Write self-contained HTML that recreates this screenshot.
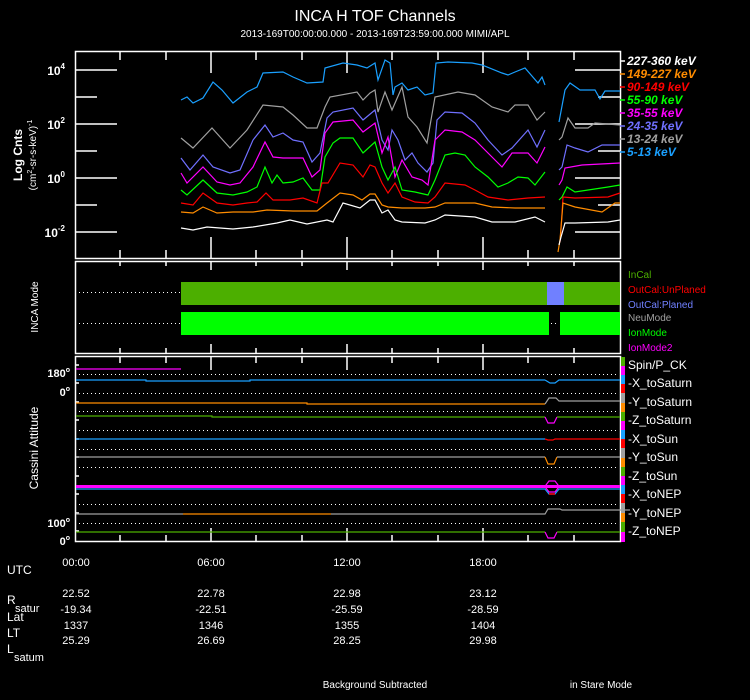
<!DOCTYPE html>
<html><head><meta charset="utf-8"><style>
html,body{margin:0;padding:0;background:#000;width:750px;height:700px;overflow:hidden}
svg{display:block}
text{font-family:"Liberation Sans",sans-serif;fill:#fff}
</style></head><body>
<svg width="750" height="700" viewBox="0 0 750 700" xmlns="http://www.w3.org/2000/svg">
<rect width="750" height="700" fill="#000"/>
<text x="375" y="21" font-size="16" text-anchor="middle">INCA H TOF Channels</text>
<text x="375" y="37" font-size="10" text-anchor="middle">2013-169T00:00:00.000 - 2013-169T23:59:00.000 MIMI/APL</text>

<!-- TOP PANEL -->
<g stroke="#fff" stroke-width="1.5" fill="none">
<rect x="75.5" y="51.5" width="545" height="207"/>
<path d="M75 70h42M75 124h42M75 178h42M75 232h42M75 97h22M75 151h22M75 205h22"/>
<path d="M620 70h-45M620 124h-45M620 178h-45M620 232h-45M620 97h-22M620 151h-22M620 205h-22"/>
<path d="M211 51v22M347 51v22M483 51v22M120 51v9M166 51v9M256 51v9M302 51v9M392 51v9M438 51v9M528 51v9M574 51v9"/>
<path d="M211 259v-22M347 259v-22M483 259v-22M120 259v-9M166 259v-9M256 259v-9M302 259v-9M392 259v-9M438 259v-9M528 259v-9M574 259v-9"/>
</g>
<g font-size="12" font-weight="bold" text-anchor="end">
<text x="65" y="75">10<tspan font-size="8" dy="-6">4</tspan></text>
<text x="65" y="129">10<tspan font-size="8" dy="-6">2</tspan></text>
<text x="65" y="183">10<tspan font-size="8" dy="-6">0</tspan></text>
<text x="65" y="237">10<tspan font-size="8" dy="-6">-2</tspan></text>
</g>
<text transform="translate(22,155) rotate(-90)" font-size="12" font-weight="bold" text-anchor="middle">Log Cnts</text>
<text transform="translate(36,155) rotate(-90)" font-size="10" text-anchor="middle">(cm<tspan font-size="7" dy="-4">2</tspan><tspan dy="4">-sr-s-keV)</tspan><tspan font-size="7" dy="-4">-1</tspan></text>

<g fill="none" stroke-width="1.2">
<polyline stroke="#1aa0ff" points="181,100 187,97 193,103 203,98 213,82 222,90 233,103 247,92 257,87 263,73 283,72 293,77 307,83 323,82 325,68 343,63 357,65 367,68 375,63 378,80 385,60 390,63 393,95 395,87 402,83 408,90 417,87 425,95 433,93 436,63 448,62 472,63 482,65 502,73 508,75 515,72 525,68 538,83 542,77 545,85"/>
<polyline stroke="#1aa0ff" points="559,122 565,90 570,83 580,90 595,90 600,99 605,91 620,91"/>
<polyline stroke="#a0a0a0" points="181,138 193,148 212,128 230,148 247,130 263,105 283,107 293,115 307,128 317,128 325,107 330,97 357,92 363,100 370,93 375,90 378,112 385,92 392,110 402,87 408,117 417,127 427,143 435,97 458,92 475,95 492,107 508,112 515,105 528,105 537,120 545,112"/>
<polyline stroke="#a0a0a0" points="559,140 562,137 568,118 575,128 588,128 595,123 620,125"/>
<polyline stroke="#7070ff" points="181,158 190,170 203,155 213,167 230,173 240,170 253,140 265,125 273,137 283,133 293,140 303,142 312,162 320,153 327,118 333,112 353,108 363,120 375,110 382,140 388,150 392,130 398,140 405,160 412,153 418,163 427,172 433,163 437,120 445,112 462,113 475,123 488,140 502,155 512,148 528,130 537,147 545,130"/>
<polyline stroke="#7070ff" points="559,170 562,167 567,145 575,148 588,152 602,145 620,145"/>
<polyline stroke="#ff00ff" points="181,173 187,183 203,167 217,182 230,185 240,183 253,167 265,142 273,157 283,158 293,158 303,158 312,177 320,170 325,133 333,122 353,120 363,132 375,123 382,153 388,137 395,177 402,160 412,177 422,180 428,185 435,140 445,130 462,132 475,140 488,153 502,167 512,153 528,153 537,163 545,147"/>
<polyline stroke="#ff00ff" points="559,185 562,180 565,168 582,165 620,163"/>
<polyline stroke="#00ff00" points="181,190 187,195 203,180 217,193 233,195 247,192 257,187 265,167 272,183 277,175 283,183 293,182 303,178 312,190 320,190 325,157 333,143 340,138 353,138 363,153 375,142 382,167 388,180 395,167 402,190 415,192 428,195 435,180 445,155 455,153 465,155 475,167 488,177 498,187 508,183 518,177 528,178 535,185 545,172"/>
<polyline stroke="#00ff00" points="559,200 562,197 567,187 575,192 608,187 620,185"/>
<polyline stroke="#ff0000" points="181,203 193,205 203,193 217,203 233,205 247,203 257,202 266,193 273,200 290,200 303,198 317,203 322,183 328,183 340,163 353,165 363,177 370,165 375,167 382,183 388,193 395,183 402,197 415,202 428,203 435,197 445,183 465,185 475,190 488,197 508,200 528,198 545,197"/>
<polyline stroke="#ff0000" points="560,242 561,230 563,197 575,198 608,197 620,193"/>
<polyline stroke="#ff8c00" points="181,212 193,213 203,207 217,213 233,212 253,212 267,210 293,211 317,211 327,203 340,193 353,195 362,200 370,194 375,194 382,205 388,207 402,208 425,208 435,207 445,203 475,203 492,207 515,208 545,208"/>
<polyline stroke="#ff8c00" points="558,252 560,240 563,203 575,207 602,212 615,203 620,203"/>
<polyline stroke="#ffffff" points="181,228 193,230 207,227 233,229 253,227 277,223 290,220 307,224 327,220 333,222 343,203 360,208 370,200 375,200 382,213 388,210 395,220 402,222 425,223 435,220 445,215 475,217 492,222 515,222 535,217 545,222"/>
<polyline stroke="#ffffff" points="559,245 561,237 565,223 575,223 608,222 620,220"/>
</g>
<g stroke-width="1.5">
<path d="M620 61h5" stroke="#fff"/><path d="M620 74h5" stroke="#ff8c00"/><path d="M620 87h5" stroke="#f00"/><path d="M620 100h5" stroke="#0f0"/><path d="M620 113h5" stroke="#f0f"/><path d="M620 126h5" stroke="#7070ff"/><path d="M620 139h5" stroke="#a0a0a0"/><path d="M620 152h5" stroke="#1aa0ff"/>
</g>
<g font-size="12" font-weight="bold" font-style="italic">
<text x="627" y="65" fill="#fff">227-360 keV</text>
<text x="627" y="78" style="fill:#ff8c00">149-227 keV</text>
<text x="627" y="91" style="fill:#f00">90-149 keV</text>
<text x="627" y="104" style="fill:#0f0">55-90 keV</text>
<text x="627" y="117" style="fill:#f0f">35-55 keV</text>
<text x="627" y="130" style="fill:#7070ff">24-35 keV</text>
<text x="627" y="143" style="fill:#a0a0a0">13-24 keV</text>
<text x="627" y="156" style="fill:#1aa0ff">5-13 keV</text>
</g>

<!-- MIDDLE PANEL -->
<g stroke="#fff" stroke-width="1.5" fill="none">
<rect x="75.5" y="261.5" width="545" height="92"/>
<path d="M211 261v9M347 261v9M483 261v9M120 261v5M166 261v5M256 261v5M302 261v5M392 261v5M438 261v5M528 261v5M574 261v5"/>
<path d="M211 353v-9M347 353v-9M483 353v-9M120 353v-5M166 353v-5M256 353v-5M302 353v-5M392 353v-5M438 353v-5M528 353v-5M574 353v-5"/>
</g>
<rect x="181" y="282" width="439" height="23" fill="#4caf00"/>
<rect x="547" y="282" width="17" height="23" fill="#7080ff"/>
<rect x="181" y="312" width="368" height="23" fill="#00ff00"/>
<rect x="560" y="312" width="60" height="23" fill="#00ff00"/>
<g stroke="#fff" stroke-width="1" stroke-dasharray="1 3">
<path d="M79 292.5h102M79 323.5h102M551 323.5h8"/>
</g>
<text transform="translate(38,307) rotate(-90)" font-size="10" text-anchor="middle">INCA Mode</text>
<g font-size="10">
<text x="628" y="278" style="fill:#4caf00">InCal</text>
<text x="628" y="293" style="fill:#f00">OutCal:UnPlaned</text>
<text x="628" y="308" style="fill:#7080ff">OutCal:Planed</text>
<text x="628" y="321" style="fill:#a0a0a0">NeuMode</text>
<text x="628" y="336" style="fill:#0f0">IonMode</text>
<text x="628" y="351" style="fill:#f0f">IonMode2</text>
</g>

<!-- BOTTOM PANEL -->
<g stroke="#fff" stroke-width="1.5" fill="none">
<rect x="75.5" y="356.5" width="545" height="185"/>
<path d="M211 356v14M347 356v14M483 356v14M120 356v7M166 356v7M256 356v7M302 356v7M392 356v7M438 356v7M528 356v7M574 356v7"/>
<path d="M211 542v-14M347 542v-14M483 542v-14M120 542v-7M166 542v-7M256 542v-7M302 542v-7M392 542v-7M438 542v-7M528 542v-7M574 542v-7"/>
<path d="M75 365h4M75 383h4M75 402h4M75 420h4M75 439h4M75 457h4M75 476h4M75 494h4M75 513h4M75 531h4"/>
</g>
<g stroke="#fff" stroke-width="1" stroke-dasharray="1 3">
<path d="M79 374.5h538M79 393.5h538M79 411.5h538M79 430.5h538M79 449.5h538M79 467.5h538M79 504.5h538M79 523.5h538"/>
</g>
<g fill="none" stroke-width="1.2">
<path d="M76 369h105" stroke="#f0f"/>
<path d="M76 380h70v1h104v-1h295M545 380l5 3h5l4-3h61" stroke="#1aa0ff"/>
<path d="M76 403h231v1h238" stroke="#ff8c00"/>
<path d="M545 404l4-6h7l3 3h61" stroke="#a0a0a0"/>
<path d="M76 416h136v1h333" stroke="#4caf00"/><path d="M545 417l3 6h6l3-6" stroke="#f0f"/><path d="M557 417h63" stroke="#4caf00"/>
<path d="M76 439h469" stroke="#1aa0ff"/><path d="M545 439l3 1h5l2-1h65" stroke="#f00"/>
<path d="M76 457h469" stroke="#a0a0a0"/><path d="M545 457l3 7h6l3-7" stroke="#ff8c00"/><path d="M557 457h63" stroke="#a0a0a0"/>
<path d="M76 489h469l4 5h6l4-5h61" stroke="#1aa0ff"/><path d="M549 494h6" stroke="#f00" stroke-width="1.5"/>
<path d="M76 514h107" stroke="#a0a0a0"/><path d="M183 514h148" stroke="#ff8c00"/><path d="M331 514h214l3-5h12l2 1h68" stroke="#a0a0a0"/>
<path d="M76 532h469" stroke="#4caf00"/><path d="M545 532l3 6h6l3-6" stroke="#f0f"/><path d="M557 532h63" stroke="#4caf00"/>
</g>
<rect x="76" y="485" width="544" height="3" fill="#f0f"/>
<path d="M546 485l3-4h6l3 4v3l-3 4h-6l-3-4z" fill="none" stroke="#f0f" stroke-width="1.2"/>
<g>
<rect x="621" y="357" width="4" height="9" fill="#4caf00"/><rect x="621" y="366" width="4" height="9" fill="#f0f"/><rect x="621" y="375" width="4" height="9" fill="#1aa0ff"/><rect x="621" y="384" width="4" height="9" fill="#f00"/><rect x="621" y="393" width="4" height="10" fill="#a0a0a0"/><rect x="621" y="403" width="4" height="9" fill="#ff8c00"/>
<rect x="621" y="412" width="4" height="9" fill="#4caf00"/><rect x="621" y="421" width="4" height="9" fill="#f0f"/><rect x="621" y="430" width="4" height="9" fill="#1aa0ff"/><rect x="621" y="439" width="4" height="9" fill="#f00"/><rect x="621" y="448" width="4" height="10" fill="#a0a0a0"/><rect x="621" y="458" width="4" height="9" fill="#ff8c00"/>
<rect x="621" y="467" width="4" height="9" fill="#4caf00"/><rect x="621" y="476" width="4" height="9" fill="#f0f"/><rect x="621" y="485" width="4" height="9" fill="#1aa0ff"/><rect x="621" y="494" width="4" height="9" fill="#f00"/><rect x="621" y="503" width="4" height="10" fill="#a0a0a0"/><rect x="621" y="513" width="4" height="9" fill="#ff8c00"/>
<rect x="621" y="522" width="4" height="10" fill="#4caf00"/><rect x="621" y="532" width="4" height="10" fill="#f0f"/>
</g>
<g font-size="11" font-weight="bold" text-anchor="end">
<text x="70" y="377">180<tspan font-size="7" dy="-5">o</tspan></text>
<text x="70" y="396">0<tspan font-size="7" dy="-5">o</tspan></text>
<text x="70" y="527">100<tspan font-size="7" dy="-5">o</tspan></text>
<text x="70" y="545">0<tspan font-size="7" dy="-5">o</tspan></text>
</g>
<text transform="translate(38,448) rotate(-90)" font-size="12" text-anchor="middle">Cassini Attitude</text>
<g font-size="12">
<text x="628" y="369">Spin/P_CK</text>
<text x="628" y="387">-X_toSaturn</text>
<text x="628" y="406">-Y_toSaturn</text>
<text x="628" y="424">-Z_toSaturn</text>
<text x="628" y="443">-X_toSun</text>
<text x="628" y="461">-Y_toSun</text>
<text x="628" y="480">-Z_toSun</text>
<text x="628" y="498">-X_toNEP</text>
<text x="628" y="517">-Y_toNEP</text>
<text x="628" y="535">-Z_toNEP</text>
</g>

<!-- BOTTOM TEXT -->
<g font-size="11" text-anchor="middle">
<text x="76" y="566">00:00</text><text x="211" y="566">06:00</text><text x="347" y="566">12:00</text><text x="483" y="566">18:00</text>
<text x="76" y="597">22.52</text><text x="211" y="597">22.78</text><text x="347" y="597">22.98</text><text x="483" y="597">23.12</text>
<text x="76" y="613">-19.34</text><text x="211" y="613">-22.51</text><text x="347" y="613">-25.59</text><text x="483" y="613">-28.59</text>
<text x="76" y="629">1337</text><text x="211" y="629">1346</text><text x="347" y="629">1355</text><text x="483" y="629">1404</text>
<text x="76" y="644">25.29</text><text x="211" y="644">26.69</text><text x="347" y="644">28.25</text><text x="483" y="644">29.98</text>
</g>
<g font-size="12">
<text x="7" y="574">UTC</text>
<text x="7" y="604">R</text>
<text x="15" y="612" font-size="11">satur</text>
<text x="7" y="621">Lat</text>
<text x="7" y="637">LT</text>
<text x="7" y="653">L</text>
<text x="14" y="661" font-size="11">satum</text>
</g>
<text x="375" y="688" font-size="10" text-anchor="middle">Background Subtracted</text>
<text x="601" y="688" font-size="10" text-anchor="middle">in Stare Mode</text>
</svg>
</body></html>
